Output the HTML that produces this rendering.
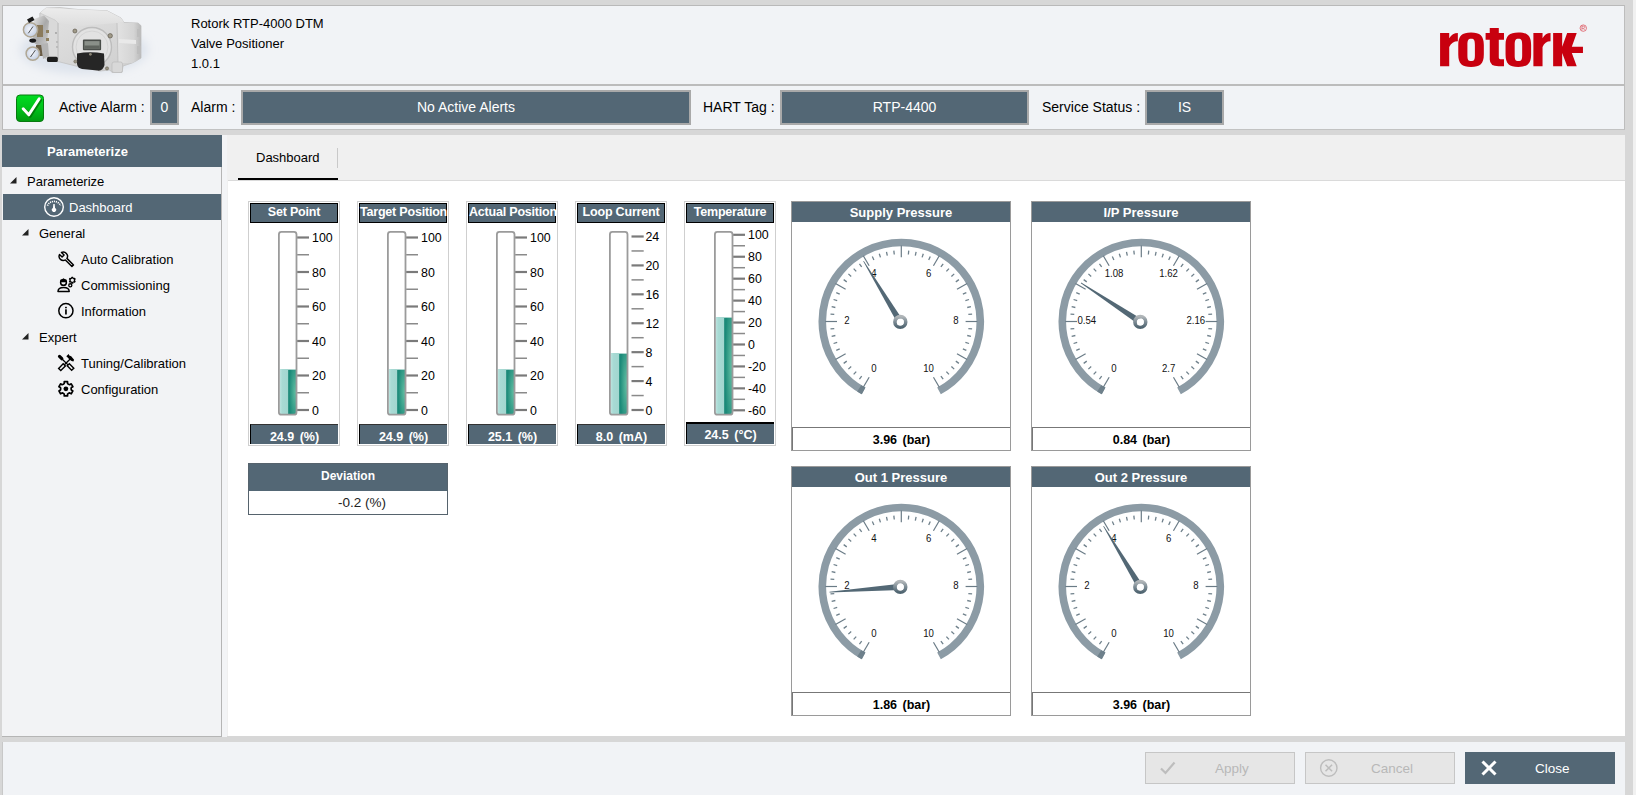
<!DOCTYPE html><html><head><meta charset="utf-8"><style>
*{margin:0;padding:0;box-sizing:border-box}
html,body{width:1636px;height:795px;overflow:hidden;background:#d7d7d7;font-family:"Liberation Sans", sans-serif;position:relative}
.abs{position:absolute}
.panel{position:absolute;background:#f1f3f6;}
.t13{font-size:13px;color:#000;white-space:nowrap;position:absolute;line-height:16px}
.slbox{position:absolute;background:#536775;border:2px solid #a9a9a9;color:#fff;font-size:14px;text-align:center;white-space:nowrap}
.dial{position:absolute;width:220px;height:250px;border:1px solid #9a9a9a;background:#fff}
.dhead{position:absolute;left:0;top:0;width:218px;height:20px;background:#536775;color:#fff;font-weight:bold;font-size:13px;text-align:center;line-height:22px}
.dval{position:absolute;left:0;top:225px;width:218px;height:23px;border-top:1px solid #777;border-left:1px solid #777;color:#000;font-weight:bold;font-size:12.5px;text-align:center;line-height:25px;word-spacing:2px}
.bar{position:absolute;top:201px;width:92px;height:245px;border:1px solid #cfcfcf;background:#fff}
.bhead{position:absolute;left:1px;top:1px;width:88px;height:20px;background:#536775;border:1px solid #000;color:#fff;font-weight:bold;font-size:12.5px;text-align:center;line-height:16px;white-space:nowrap;overflow:visible;letter-spacing:-0.2px}
.bval{position:absolute;left:1px;top:222px;width:88px;height:20px;background:#536775;border-left:1px solid #000;border-top:1px solid #333;color:#fff;font-weight:bold;font-size:12.5px;text-align:center;line-height:24px;word-spacing:2px}
.bval.t{top:220px;height:22px;border-top:2px solid #000;line-height:22px}
.nav{position:absolute;left:2px;top:135px;width:220px;height:602px;background:#f2f3f5;border-right:1px solid #b5b5b5;border-bottom:1px solid #b5b5b5}
.btn{position:absolute;top:752px;width:150px;height:32px;font-size:13.5px;line-height:32px}
</style></head><body><div class="abs" style="left:1633px;top:0;width:3px;height:795px;background:#f1f1f1"></div>
<div class="panel" style="left:2px;top:5px;width:1623px;height:81px;border-left:1px solid #b9b9b9;border-top:1px solid #b9b9b9;border-right:1px solid #bdbdbd;border-bottom:2px solid #bcbcbc"></div>
<div class="panel" style="left:2px;top:86px;width:1623px;height:44px;border-left:1px solid #b9b9b9;border-right:1px solid #bdbdbd;border-bottom:1px solid #c2c2c2"></div>
<svg class="abs" style="left:3px;top:6px" width="160" height="78" viewBox="3 6 160 78">
<defs>
<filter id="blur6" x="-50%" y="-50%" width="200%" height="200%"><feGaussianBlur stdDeviation="5"/></filter>
<linearGradient id="topf" x1="0" y1="0" x2="0" y2="1"><stop offset="0" stop-color="#ececec"/><stop offset="1" stop-color="#dedede"/></linearGradient>
<linearGradient id="frontf" x1="0" y1="0" x2="1" y2="1"><stop offset="0" stop-color="#e4e4e4"/><stop offset="1" stop-color="#cdcdcd"/></linearGradient>
<linearGradient id="rightf" x1="0" y1="0" x2="1" y2="0"><stop offset="0" stop-color="#e2e2e2"/><stop offset="0.7" stop-color="#d4d4d4"/><stop offset="1" stop-color="#b9b9b9"/></linearGradient>
<radialGradient id="gface" cx="0.45" cy="0.45" r="0.6"><stop offset="0" stop-color="#f4f6fb"/><stop offset="1" stop-color="#bfcbe0"/></radialGradient>
<linearGradient id="chrome" x1="0" y1="0" x2="1" y2="1"><stop offset="0" stop-color="#e8e8e8"/><stop offset="0.5" stop-color="#a9a9a9"/><stop offset="1" stop-color="#d0d0d0"/></linearGradient>
</defs>
<ellipse cx="84" cy="50" rx="64" ry="24" fill="#dde3ec" filter="url(#blur6)"/>
<polygon points="40,13 46,8 60,7.5 78,9.5 100,10.5 107,10.7 121,18 124,22.5 138,23 141,25.7 141,58 136,61 132,63 123,66 122,72.5 112,72.5 110,70 100,71 77,66.3 60,62 47,60 40,52" fill="url(#frontf)" stroke="#c2c2c2" stroke-width="0.8"/>
<polygon points="40,13 46,8 78,9.5 107,10.7 121,18 124,22.5 117,23 80,26 59,23 55,20" fill="url(#topf)"/>
<polygon points="40,13 55,20 58,23 58,60 47,60 40,52" fill="#d9d9d9" stroke="#c4c4c4" stroke-width="0.6"/>
<line x1="58" y1="23" x2="58" y2="60" stroke="#bdbdbd" stroke-width="0.8"/>
<polygon points="117,23 138,23 141,25.7 141,58 132,63 118,63" fill="url(#rightf)"/>
<line x1="117" y1="23" x2="118" y2="63" stroke="#bcbcbc" stroke-width="0.8"/>
<rect x="137" y="29" width="4" height="8" fill="#bdbdbd"/><rect x="137" y="46" width="4" height="8" fill="#bdbdbd"/>
<polygon points="119,39 136,40 136,44 119,43" fill="#e9e9e9"/>
<circle cx="92" cy="47" r="19.5" fill="#e2e2e2" stroke="#bdbdbd" stroke-width="1.4"/>
<circle cx="92" cy="47" r="16" fill="none" stroke="#d0d0d0" stroke-width="0.8"/>
<rect x="82.9" y="39.6" width="18.2" height="10.7" rx="1" fill="#4a4e4a"/>
<rect x="84.4" y="41.1" width="15.2" height="7.7" fill="#8a9089"/>
<rect x="84.4" y="45.5" width="15.2" height="3.3" fill="#5f645e"/>
<path d="M77,53.5 Q90,51 104,53.5 L104.5,65 Q103,71 98,70.6 L82,69 Q77.5,68 77,64 Z" fill="#262626"/>
<circle cx="110.2" cy="35.8" r="2.2" fill="#a09a88" stroke="#5e594d" stroke-width="0.7"/>
<circle cx="74.9" cy="31" r="2" fill="#a09a88" stroke="#5e594d" stroke-width="0.7"/>
<circle cx="75.4" cy="61.5" r="1.6" fill="#9a9484" stroke="#5e594d" stroke-width="0.5"/>
<circle cx="90.4" cy="54.3" r="1.4" fill="#8a8474"/>
<circle cx="107" cy="68.4" r="1.6" fill="#9a9484" stroke="#5e594d" stroke-width="0.5"/>
<rect x="112" y="62" width="10.5" height="10.5" rx="2" fill="#d8d8d8" stroke="#bcbcbc" stroke-width="0.7"/>
<circle cx="56" cy="33" r="0.9" fill="#9a9a9a"/><circle cx="57" cy="42" r="0.9" fill="#b0b0b0"/><circle cx="57" cy="47" r="0.9" fill="#b0b0b0"/>
<polygon points="34,19 44,15.5 49,21 47,44 41,48 33,42" fill="url(#chrome)"/>
<rect x="37" y="25" width="6" height="12" fill="#8a7a5c"/>
<rect x="36" y="45" width="8" height="11" fill="#6a5c46"/>
<polygon points="41,44 48,43 49,56 43,59" fill="#b4b4b4"/>
<rect x="46" y="30" width="3" height="3" fill="#8e8060"/><rect x="46" y="38" width="3" height="3" fill="#8e8060"/>
<circle cx="30.5" cy="29.8" r="7.1" fill="url(#gface)" stroke="#b0a794" stroke-width="1.5"/>
<line x1="28.3" y1="33.3" x2="33" y2="26.5" stroke="#2a2a2a" stroke-width="0.8"/>
<circle cx="32.8" cy="53.6" r="6.7" fill="url(#gface)" stroke="#b0a794" stroke-width="1.5"/>
<line x1="30.5" y1="57" x2="35.3" y2="50.2" stroke="#2a2a2a" stroke-width="0.8"/>
<polygon points="27,19.5 32.5,16.5 34.5,20 29,23" fill="#1a1a1a"/>
<ellipse cx="32.7" cy="40.6" rx="3.4" ry="2.1" fill="#1a1a1a"/>
<rect x="47" y="56.8" width="10.8" height="5.2" rx="1.5" fill="#1c1c1c"/>
</svg>
<div class="t13" style="left:191px;top:16px;font-size:13px">Rotork RTP-4000 DTM</div>
<div class="t13" style="left:191px;top:36px;font-size:13px">Valve Positioner</div>
<div class="t13" style="left:191px;top:56px;font-size:13px">1.0.1</div>
<svg class="abs" style="left:1430px;top:20px" width="170" height="55" viewBox="0 0 1636 529">
<g fill="#c8000f">
<path d="M97,125 H185 V175 Q215,125 268,125 V205 Q210,205 185,260 V445 H97 Z"/>
<path fill-rule="evenodd" transform="translate(0,0)" d="M395,120 C482,120 518,152 518,240 L518,332 C518,420 482,452 395,452 C308,452 272,420 272,332 L272,240 C272,152 308,120 395,120 Z M396,180 C426,180 432,198 432,240 L432,338 C432,380 426,394 396,394 C366,394 360,380 360,338 L360,240 C360,198 366,180 396,180 Z"/>
<path d="M575,78 H662 V125 H712 V190 H662 V360 Q662,378 690,378 H712 V445 H660 Q575,445 575,380 V190 H535 V125 H575 Z"/>
<path fill-rule="evenodd" transform="translate(455,0)" d="M395,120 C482,120 518,152 518,240 L518,332 C518,420 482,452 395,452 C308,452 272,420 272,332 L272,240 C272,152 308,120 395,120 Z M396,180 C426,180 432,198 432,240 L432,338 C432,380 426,394 396,394 C366,394 360,380 360,338 L360,240 C360,198 366,180 396,180 Z"/>
<path d="M995,125 H1083 V175 Q1110,125 1160,125 V205 Q1105,205 1083,260 V445 H995 Z"/>
<path d="M1185,125 H1272 V258 L1320,125 H1412 L1365,258 H1472 V318 H1365 L1412,445 H1320 L1272,318 V445 H1185 Z"/>
</g>
<circle cx="1475" cy="78" r="31" fill="none" stroke="#d8303c" stroke-width="6"/>
<path d="M1462,98 V58 M1462,60 H1478 Q1490,60 1490,70 Q1490,80 1478,80 H1462 M1474,80 L1490,98" fill="none" stroke="#d8303c" stroke-width="5"/>
</svg>
<svg class="abs" style="left:15px;top:94px" width="30" height="29" viewBox="0 0 30 29">
<defs><linearGradient id="gg" x1="0" y1="0" x2="0" y2="1"><stop offset="0" stop-color="#00dd22"/><stop offset="0.5" stop-color="#00c21a"/><stop offset="1" stop-color="#009a10"/></linearGradient></defs>
<rect x="1.5" y="1" width="27" height="26.5" rx="3.5" fill="url(#gg)" stroke="#087a10" stroke-width="1"/>
<path d="M8.6,15.2 L14.2,21.2 L24.6,5.2" fill="none" stroke="#005a00" stroke-width="3.4" stroke-linecap="round" stroke-linejoin="round" transform="translate(0.8,0.8)" opacity="0.6"/>
<path d="M8.2,14.8 L13.8,20.8 L24.2,4.8" fill="none" stroke="#fff" stroke-width="3" stroke-linecap="round" stroke-linejoin="round"/>
</svg>
<div class="t13" style="left:59px;top:99px;font-size:14px">Active Alarm :</div>
<div class="slbox" style="left:150px;top:90px;width:29px;height:35px;line-height:31px">0</div>
<div class="t13" style="left:191px;top:99px;font-size:14px">Alarm :</div>
<div class="slbox" style="left:241px;top:90px;width:450px;height:35px;line-height:31px">No Active Alerts</div>
<div class="t13" style="left:703px;top:99px;font-size:14px">HART Tag :</div>
<div class="slbox" style="left:780px;top:90px;width:249px;height:35px;line-height:31px">RTP-4400</div>
<div class="t13" style="left:1042px;top:99px;font-size:14px">Service Status :</div>
<div class="slbox" style="left:1145px;top:90px;width:79px;height:35px;line-height:31px">IS</div>
<div class="nav"></div>
<div class="abs" style="left:2px;top:135px;width:220px;height:32px;background:#536775;color:#fff;font-weight:bold;font-size:13px;line-height:34px;padding-left:45px">Parameterize</div>
<div class="abs" style="left:3px;top:194px;width:218px;height:26px;background:#536775"></div>
<svg class="abs" style="left:9px;top:176px" width="9" height="9"><polygon points="7.5,1 7.5,7.5 1,7.5" fill="#222"/></svg>
<div class="t13" style="left:27px;top:174px">Parameterize</div>
<div class="t13" style="left:69px;top:200px;color:#fff">Dashboard</div>
<svg class="abs" style="left:21px;top:228px" width="9" height="9"><polygon points="7.5,1 7.5,7.5 1,7.5" fill="#222"/></svg>
<div class="t13" style="left:39px;top:226px">General</div>
<div class="t13" style="left:81px;top:252px">Auto Calibration</div>
<div class="t13" style="left:81px;top:278px">Commissioning</div>
<div class="t13" style="left:81px;top:304px">Information</div>
<svg class="abs" style="left:21px;top:332px" width="9" height="9"><polygon points="7.5,1 7.5,7.5 1,7.5" fill="#222"/></svg>
<div class="t13" style="left:39px;top:330px">Expert</div>
<div class="t13" style="left:81px;top:356px">Tuning/Calibration</div>
<div class="t13" style="left:81px;top:382px">Configuration</div>
<svg class="abs" style="left:42px;top:195px" width="24" height="24" viewBox="0 0 24 24">
<circle cx="12" cy="12" r="9.3" fill="none" stroke="#fff" stroke-width="1.4"/>
<path d="M5.4,10.6 A7.3,7.3 0 0 1 18.6,10.6" fill="none" stroke="#fff" stroke-width="1.7" stroke-dasharray="1.1,0.9"/>
<path d="M11.35,9 L12.65,9 L13.1,12.9 A2.15,2.15 0 1 1 10.9,12.9 Z" fill="#fff"/>
</svg>
<svg class="abs" style="left:54px;top:248px" width="24" height="24" viewBox="0 0 24 24"><path transform="translate(9.3,8.3) rotate(-45)" d="M1.4,-3.96 L1.4,-0.3 L-1.4,-0.3 L-1.4,-3.96 A4.2,4.2 0 0 0 -1.1,4.05 L-1.1,13.3 L1.1,13.3 L1.1,4.05 A4.2,4.2 0 0 0 1.4,-3.96 Z" fill="none" stroke="#000" stroke-width="1.45" stroke-linejoin="round"/></svg>
<svg class="abs" style="left:54px;top:274px" width="24" height="24" viewBox="0 0 24 24">
<path d="M4,17.6 Q4,13.6 9.6,13.6 Q15.2,13.6 15.2,17.6 Z" fill="none" stroke="#000" stroke-width="1.5" stroke-linejoin="round"/>
<circle cx="9.5" cy="8.4" r="2.9" fill="none" stroke="#000" stroke-width="1.5"/>
<path d="M6.4,8.2 L6.6,5.4 L7.8,5.9 L9.5,4.3 L11.2,5.9 L12.4,5.4 L12.6,8.2 Z" fill="#000"/>
<circle cx="16.3" cy="11.3" r="1.55" fill="none" stroke="#000" stroke-width="1.3"/>
<path d="M17.25,4.38 L17.77,4.07 L17.78,3.25 L18.82,3.25 L18.83,4.07 L19.35,4.38 L19.88,4.67 L20.60,4.27 L21.12,5.17 L20.41,5.59 L20.40,6.20 L20.41,6.81 L21.12,7.23 L20.60,8.13 L19.88,7.73 L19.35,8.02 L18.83,8.33 L18.82,9.15 L17.78,9.15 L17.77,8.33 L17.25,8.02 L16.72,7.73 L16.00,8.13 L15.48,7.23 L16.19,6.81 L16.20,6.20 L16.19,5.59 L15.48,5.17 L16.00,4.27 L16.72,4.67 Z" fill="none" stroke="#000" stroke-width="1.2" stroke-linejoin="round"/></svg>
<svg class="abs" style="left:57px;top:302px" width="18" height="18" viewBox="0 0 18 18">
<circle cx="8.9" cy="8.7" r="7.1" fill="none" stroke="#000" stroke-width="1.5"/>
<rect x="8.1" y="7.3" width="1.7" height="5.2" fill="#000"/><rect x="8.1" y="4.8" width="1.7" height="1.5" fill="#000"/>
</svg>
<svg class="abs" style="left:54px;top:350px" width="24" height="24" viewBox="0 0 24 24">
<line x1="5.5" y1="6.4" x2="7.8" y2="8.7" stroke="#000" stroke-width="3.2" stroke-linecap="round"/>
<line x1="7.8" y1="8.7" x2="14" y2="14.9" stroke="#000" stroke-width="1.3"/>
<rect x="13.35" y="15.45" width="6.3" height="3.1" transform="rotate(45 16.5 17)" fill="none" stroke="#000" stroke-width="1.4"/>
<rect x="4.75" y="15.65" width="6.5" height="3.1" transform="rotate(-45 8 17.2)" fill="none" stroke="#000" stroke-width="1.4"/>
<line x1="10.4" y1="14.8" x2="16.2" y2="9" stroke="#000" stroke-width="1.3"/>
<polygon points="12.3,6.2 14.6,4.0 15.3,5.6 17.2,6.2 20.1,9.8 19.4,11.4 17.6,10.9 15.3,9.4 14.4,8.2" fill="#000"/>
</svg>
<svg class="abs" style="left:54px;top:376px" width="24" height="24" viewBox="0 0 24 24">
<path d="M9.30,8.30 L10.26,7.44 L10.26,5.69 L13.54,5.69 L13.54,7.44 L14.50,8.30 L15.72,8.70 L17.24,7.82 L18.88,10.67 L17.36,11.54 L17.10,12.80 L17.36,14.06 L18.88,14.93 L17.24,17.78 L15.72,16.90 L14.50,17.30 L13.54,18.16 L13.54,19.91 L10.26,19.91 L10.26,18.16 L9.30,17.30 L8.08,16.90 L6.56,17.78 L4.92,14.93 L6.44,14.06 L6.70,12.80 L6.44,11.54 L4.92,10.67 L6.56,7.82 L8.08,8.70 Z" fill="none" stroke="#000" stroke-width="1.7" stroke-linejoin="round"/>
<circle cx="11.9" cy="12.8" r="2.4" fill="#000"/>
</svg>
<div class="abs" style="left:222px;top:135px;width:5px;height:602px;background:#f3f4f6"></div>
<div class="abs" style="left:227px;top:135px;width:1398px;height:46px;background:#f0f0f0"></div>
<div class="abs" style="left:227px;top:181px;width:1398px;height:555px;background:#fff;border-left:1px solid #f0f0f0"></div>
<div class="t13" style="left:256px;top:150px">Dashboard</div>
<div class="abs" style="left:337px;top:148px;width:1px;height:20px;background:#c9c9c9"></div>
<div class="abs" style="left:228px;top:180px;width:1397px;height:1px;background:#dadada"></div><div class="abs" style="left:238px;top:178px;width:100px;height:2px;background:#000"></div>
<svg width="0" height="0" style="position:absolute"><defs>
<radialGradient id="tealg" cx="0.85" cy="0.5" r="0.75"><stop offset="0" stop-color="#5fbca1"/><stop offset="1" stop-color="#1c8a79"/></radialGradient><linearGradient id="lightg" x1="0" y1="0" x2="1" y2="0"><stop offset="0" stop-color="#bce4df"/><stop offset="0.3" stop-color="#a8dad4"/><stop offset="1" stop-color="#a2d6cf"/></linearGradient>
<linearGradient id="capg" x1="0" y1="0" x2="0" y2="1"><stop offset="0" stop-color="#b0b5b8"/><stop offset="0.5" stop-color="#7d8c95"/><stop offset="1" stop-color="#506571"/></linearGradient>
</defs></svg>
<div class="bar" style="left:248px"><div class="bhead">Set Point</div><svg width="92" height="245" style="position:absolute;left:-1px;top:-1px"><rect x="31.8" y="168" width="8.3" height="45.5" fill="url(#lightg)"/><rect x="40.1" y="168.6" width="8.4" height="44.9" fill="url(#tealg)"/><rect x="30.9" y="30.9" width="17.6" height="182.8" rx="2.5" fill="none" stroke="#9b9b9b" stroke-width="1.8"/><line x1="49.2" y1="209.00" x2="61" y2="209.00" stroke="#7a7a7a" stroke-width="2.2"/><text x="64" y="194.18" font-size="12.4" fill="#000" transform="scale(1,1.1)">0</text><line x1="49.2" y1="191.75" x2="61" y2="191.75" stroke="#8a8a8a" stroke-width="1.5"/><line x1="49.2" y1="174.50" x2="61" y2="174.50" stroke="#7a7a7a" stroke-width="2.2"/><text x="64" y="162.82" font-size="12.4" fill="#000" transform="scale(1,1.1)">20</text><line x1="49.2" y1="157.25" x2="61" y2="157.25" stroke="#8a8a8a" stroke-width="1.5"/><line x1="49.2" y1="140.00" x2="61" y2="140.00" stroke="#7a7a7a" stroke-width="2.2"/><text x="64" y="131.45" font-size="12.4" fill="#000" transform="scale(1,1.1)">40</text><line x1="49.2" y1="122.75" x2="61" y2="122.75" stroke="#8a8a8a" stroke-width="1.5"/><line x1="49.2" y1="105.50" x2="61" y2="105.50" stroke="#7a7a7a" stroke-width="2.2"/><text x="64" y="100.09" font-size="12.4" fill="#000" transform="scale(1,1.1)">60</text><line x1="49.2" y1="88.25" x2="61" y2="88.25" stroke="#8a8a8a" stroke-width="1.5"/><line x1="49.2" y1="71.00" x2="61" y2="71.00" stroke="#7a7a7a" stroke-width="2.2"/><text x="64" y="68.73" font-size="12.4" fill="#000" transform="scale(1,1.1)">80</text><line x1="49.2" y1="53.75" x2="61" y2="53.75" stroke="#8a8a8a" stroke-width="1.5"/><line x1="49.2" y1="36.50" x2="61" y2="36.50" stroke="#7a7a7a" stroke-width="2.2"/><text x="64" y="37.36" font-size="12.4" fill="#000" transform="scale(1,1.1)">100</text></svg><div class="bval">24.9&nbsp;(%)</div></div>
<div class="bar" style="left:357px"><div class="bhead">Target Position</div><svg width="92" height="245" style="position:absolute;left:-1px;top:-1px"><rect x="31.8" y="168" width="8.3" height="45.5" fill="url(#lightg)"/><rect x="40.1" y="168.6" width="8.4" height="44.9" fill="url(#tealg)"/><rect x="30.9" y="30.9" width="17.6" height="182.8" rx="2.5" fill="none" stroke="#9b9b9b" stroke-width="1.8"/><line x1="49.2" y1="209.00" x2="61" y2="209.00" stroke="#7a7a7a" stroke-width="2.2"/><text x="64" y="194.18" font-size="12.4" fill="#000" transform="scale(1,1.1)">0</text><line x1="49.2" y1="191.75" x2="61" y2="191.75" stroke="#8a8a8a" stroke-width="1.5"/><line x1="49.2" y1="174.50" x2="61" y2="174.50" stroke="#7a7a7a" stroke-width="2.2"/><text x="64" y="162.82" font-size="12.4" fill="#000" transform="scale(1,1.1)">20</text><line x1="49.2" y1="157.25" x2="61" y2="157.25" stroke="#8a8a8a" stroke-width="1.5"/><line x1="49.2" y1="140.00" x2="61" y2="140.00" stroke="#7a7a7a" stroke-width="2.2"/><text x="64" y="131.45" font-size="12.4" fill="#000" transform="scale(1,1.1)">40</text><line x1="49.2" y1="122.75" x2="61" y2="122.75" stroke="#8a8a8a" stroke-width="1.5"/><line x1="49.2" y1="105.50" x2="61" y2="105.50" stroke="#7a7a7a" stroke-width="2.2"/><text x="64" y="100.09" font-size="12.4" fill="#000" transform="scale(1,1.1)">60</text><line x1="49.2" y1="88.25" x2="61" y2="88.25" stroke="#8a8a8a" stroke-width="1.5"/><line x1="49.2" y1="71.00" x2="61" y2="71.00" stroke="#7a7a7a" stroke-width="2.2"/><text x="64" y="68.73" font-size="12.4" fill="#000" transform="scale(1,1.1)">80</text><line x1="49.2" y1="53.75" x2="61" y2="53.75" stroke="#8a8a8a" stroke-width="1.5"/><line x1="49.2" y1="36.50" x2="61" y2="36.50" stroke="#7a7a7a" stroke-width="2.2"/><text x="64" y="37.36" font-size="12.4" fill="#000" transform="scale(1,1.1)">100</text></svg><div class="bval">24.9&nbsp;(%)</div></div>
<div class="bar" style="left:466px"><div class="bhead">Actual Position</div><svg width="92" height="245" style="position:absolute;left:-1px;top:-1px"><rect x="31.8" y="168" width="8.3" height="45.5" fill="url(#lightg)"/><rect x="40.1" y="168.6" width="8.4" height="44.9" fill="url(#tealg)"/><rect x="30.9" y="30.9" width="17.6" height="182.8" rx="2.5" fill="none" stroke="#9b9b9b" stroke-width="1.8"/><line x1="49.2" y1="209.00" x2="61" y2="209.00" stroke="#7a7a7a" stroke-width="2.2"/><text x="64" y="194.18" font-size="12.4" fill="#000" transform="scale(1,1.1)">0</text><line x1="49.2" y1="191.75" x2="61" y2="191.75" stroke="#8a8a8a" stroke-width="1.5"/><line x1="49.2" y1="174.50" x2="61" y2="174.50" stroke="#7a7a7a" stroke-width="2.2"/><text x="64" y="162.82" font-size="12.4" fill="#000" transform="scale(1,1.1)">20</text><line x1="49.2" y1="157.25" x2="61" y2="157.25" stroke="#8a8a8a" stroke-width="1.5"/><line x1="49.2" y1="140.00" x2="61" y2="140.00" stroke="#7a7a7a" stroke-width="2.2"/><text x="64" y="131.45" font-size="12.4" fill="#000" transform="scale(1,1.1)">40</text><line x1="49.2" y1="122.75" x2="61" y2="122.75" stroke="#8a8a8a" stroke-width="1.5"/><line x1="49.2" y1="105.50" x2="61" y2="105.50" stroke="#7a7a7a" stroke-width="2.2"/><text x="64" y="100.09" font-size="12.4" fill="#000" transform="scale(1,1.1)">60</text><line x1="49.2" y1="88.25" x2="61" y2="88.25" stroke="#8a8a8a" stroke-width="1.5"/><line x1="49.2" y1="71.00" x2="61" y2="71.00" stroke="#7a7a7a" stroke-width="2.2"/><text x="64" y="68.73" font-size="12.4" fill="#000" transform="scale(1,1.1)">80</text><line x1="49.2" y1="53.75" x2="61" y2="53.75" stroke="#8a8a8a" stroke-width="1.5"/><line x1="49.2" y1="36.50" x2="61" y2="36.50" stroke="#7a7a7a" stroke-width="2.2"/><text x="64" y="37.36" font-size="12.4" fill="#000" transform="scale(1,1.1)">100</text></svg><div class="bval">25.1&nbsp;(%)</div></div>
<div class="bar" style="left:575px"><div class="bhead">Loop Current</div><svg width="92" height="245" style="position:absolute;left:-1px;top:-1px"><rect x="35.8" y="152" width="8.3" height="61.5" fill="url(#lightg)"/><rect x="44.1" y="152.6" width="8.4" height="60.9" fill="url(#tealg)"/><rect x="34.9" y="30.9" width="17.6" height="182.8" rx="2.5" fill="none" stroke="#9b9b9b" stroke-width="1.8"/><line x1="56.5" y1="209.00" x2="68.7" y2="209.00" stroke="#7a7a7a" stroke-width="2.2"/><text x="70.5" y="194.18" font-size="12.4" fill="#000" transform="scale(1,1.1)">0</text><line x1="56.5" y1="194.54" x2="68.7" y2="194.54" stroke="#8a8a8a" stroke-width="1.5"/><line x1="56.5" y1="180.08" x2="68.7" y2="180.08" stroke="#7a7a7a" stroke-width="2.2"/><text x="70.5" y="167.89" font-size="12.4" fill="#000" transform="scale(1,1.1)">4</text><line x1="56.5" y1="165.62" x2="68.7" y2="165.62" stroke="#8a8a8a" stroke-width="1.5"/><line x1="56.5" y1="151.17" x2="68.7" y2="151.17" stroke="#7a7a7a" stroke-width="2.2"/><text x="70.5" y="141.61" font-size="12.4" fill="#000" transform="scale(1,1.1)">8</text><line x1="56.5" y1="136.71" x2="68.7" y2="136.71" stroke="#8a8a8a" stroke-width="1.5"/><line x1="56.5" y1="122.25" x2="68.7" y2="122.25" stroke="#7a7a7a" stroke-width="2.2"/><text x="70.5" y="115.32" font-size="12.4" fill="#000" transform="scale(1,1.1)">12</text><line x1="56.5" y1="107.79" x2="68.7" y2="107.79" stroke="#8a8a8a" stroke-width="1.5"/><line x1="56.5" y1="93.33" x2="68.7" y2="93.33" stroke="#7a7a7a" stroke-width="2.2"/><text x="70.5" y="89.03" font-size="12.4" fill="#000" transform="scale(1,1.1)">16</text><line x1="56.5" y1="78.88" x2="68.7" y2="78.88" stroke="#8a8a8a" stroke-width="1.5"/><line x1="56.5" y1="64.42" x2="68.7" y2="64.42" stroke="#7a7a7a" stroke-width="2.2"/><text x="70.5" y="62.74" font-size="12.4" fill="#000" transform="scale(1,1.1)">20</text><line x1="56.5" y1="49.96" x2="68.7" y2="49.96" stroke="#8a8a8a" stroke-width="1.5"/><line x1="56.5" y1="35.50" x2="68.7" y2="35.50" stroke="#7a7a7a" stroke-width="2.2"/><text x="70.5" y="36.45" font-size="12.4" fill="#000" transform="scale(1,1.1)">24</text></svg><div class="bval">8.0&nbsp;(mA)</div></div>
<div class="bar" style="left:684px"><div class="bhead">Temperature</div><svg width="92" height="245" style="position:absolute;left:-1px;top:-1px"><rect x="31.8" y="116" width="8.3" height="97.5" fill="url(#lightg)"/><rect x="40.1" y="116.6" width="8.4" height="96.9" fill="url(#tealg)"/><rect x="30.9" y="30.9" width="17.6" height="182.8" rx="2.5" fill="none" stroke="#9b9b9b" stroke-width="1.8"/><line x1="49.2" y1="209.30" x2="61" y2="209.30" stroke="#7a7a7a" stroke-width="2.2"/><text x="64" y="194.45" font-size="12.4" fill="#000" transform="scale(1,1.1)">-60</text><line x1="49.2" y1="198.33" x2="61" y2="198.33" stroke="#8a8a8a" stroke-width="1.5"/><line x1="49.2" y1="187.36" x2="61" y2="187.36" stroke="#7a7a7a" stroke-width="2.2"/><text x="64" y="174.51" font-size="12.4" fill="#000" transform="scale(1,1.1)">-40</text><line x1="49.2" y1="176.39" x2="61" y2="176.39" stroke="#8a8a8a" stroke-width="1.5"/><line x1="49.2" y1="165.43" x2="61" y2="165.43" stroke="#7a7a7a" stroke-width="2.2"/><text x="64" y="154.57" font-size="12.4" fill="#000" transform="scale(1,1.1)">-20</text><line x1="49.2" y1="154.46" x2="61" y2="154.46" stroke="#8a8a8a" stroke-width="1.5"/><line x1="49.2" y1="143.49" x2="61" y2="143.49" stroke="#7a7a7a" stroke-width="2.2"/><text x="64" y="134.62" font-size="12.4" fill="#000" transform="scale(1,1.1)">0</text><line x1="49.2" y1="132.52" x2="61" y2="132.52" stroke="#8a8a8a" stroke-width="1.5"/><line x1="49.2" y1="121.55" x2="61" y2="121.55" stroke="#7a7a7a" stroke-width="2.2"/><text x="64" y="114.68" font-size="12.4" fill="#000" transform="scale(1,1.1)">20</text><line x1="49.2" y1="110.58" x2="61" y2="110.58" stroke="#8a8a8a" stroke-width="1.5"/><line x1="49.2" y1="99.61" x2="61" y2="99.61" stroke="#7a7a7a" stroke-width="2.2"/><text x="64" y="94.74" font-size="12.4" fill="#000" transform="scale(1,1.1)">40</text><line x1="49.2" y1="88.64" x2="61" y2="88.64" stroke="#8a8a8a" stroke-width="1.5"/><line x1="49.2" y1="77.68" x2="61" y2="77.68" stroke="#7a7a7a" stroke-width="2.2"/><text x="64" y="74.80" font-size="12.4" fill="#000" transform="scale(1,1.1)">60</text><line x1="49.2" y1="66.71" x2="61" y2="66.71" stroke="#8a8a8a" stroke-width="1.5"/><line x1="49.2" y1="55.74" x2="61" y2="55.74" stroke="#7a7a7a" stroke-width="2.2"/><text x="64" y="54.85" font-size="12.4" fill="#000" transform="scale(1,1.1)">80</text><line x1="49.2" y1="44.77" x2="61" y2="44.77" stroke="#8a8a8a" stroke-width="1.5"/><line x1="49.2" y1="33.80" x2="61" y2="33.80" stroke="#7a7a7a" stroke-width="2.2"/><text x="64" y="34.91" font-size="12.4" fill="#000" transform="scale(1,1.1)">100</text></svg><div class="bval t">24.5&nbsp;(°C)</div></div>
<div class="abs" style="left:248px;top:463px;width:200px;height:52px;border:1px solid #56636d;background:#fff"><div style="height:27px;background:#536775;color:#fff;font-weight:bold;font-size:12px;text-align:center;line-height:25px">Deviation</div><div style="height:23px;color:#222;font-size:13.5px;text-align:center;line-height:23px;padding-left:28px">-0.2&nbsp;(%)</div></div>
<div class="dial" style="left:791px;top:201px"><div class="dhead">Supply Pressure</div><svg width="218" height="205" viewBox="0 0 218 205" style="position:absolute;left:0;top:20px"><path d="M71.60,168.93 A79,79 0 1 1 147.00,168.93" fill="none" stroke="#8c9ba5" stroke-width="7.6"/><path d="M71.60,168.93 A79,79 0 0 1 67.20,166.35" fill="none" stroke="#6e808b" stroke-width="7.6"/><line x1="71.30" y1="165.32" x2="77.15" y2="155.19" stroke="#6a7b86" stroke-width="1.2"/><line x1="67.45" y1="157.10" x2="69.68" y2="154.03" stroke="#6f808b" stroke-width="1.3"/><line x1="61.66" y1="152.41" x2="64.20" y2="149.59" stroke="#6f808b" stroke-width="1.3"/><line x1="56.39" y1="147.14" x2="59.21" y2="144.60" stroke="#6f808b" stroke-width="1.3"/><line x1="51.70" y1="141.35" x2="54.77" y2="139.12" stroke="#6f808b" stroke-width="1.3"/><line x1="43.48" y1="137.50" x2="53.61" y2="131.65" stroke="#6a7b86" stroke-width="1.2"/><line x1="44.26" y1="128.46" x2="47.73" y2="126.91" stroke="#6f808b" stroke-width="1.3"/><line x1="41.58" y1="121.50" x2="45.20" y2="120.33" stroke="#6f808b" stroke-width="1.3"/><line x1="39.66" y1="114.30" x2="43.37" y2="113.51" stroke="#6f808b" stroke-width="1.3"/><line x1="38.49" y1="106.94" x2="42.27" y2="106.55" stroke="#6f808b" stroke-width="1.3"/><line x1="33.30" y1="99.50" x2="45.00" y2="99.50" stroke="#6a7b86" stroke-width="1.2"/><line x1="38.49" y1="92.06" x2="42.27" y2="92.45" stroke="#6f808b" stroke-width="1.3"/><line x1="39.66" y1="84.70" x2="43.37" y2="85.49" stroke="#6f808b" stroke-width="1.3"/><line x1="41.58" y1="77.50" x2="45.20" y2="78.67" stroke="#6f808b" stroke-width="1.3"/><line x1="44.26" y1="70.54" x2="47.73" y2="72.09" stroke="#6f808b" stroke-width="1.3"/><line x1="43.48" y1="61.50" x2="53.61" y2="67.35" stroke="#6a7b86" stroke-width="1.2"/><line x1="51.70" y1="57.65" x2="54.77" y2="59.88" stroke="#6f808b" stroke-width="1.3"/><line x1="56.39" y1="51.86" x2="59.21" y2="54.40" stroke="#6f808b" stroke-width="1.3"/><line x1="61.66" y1="46.59" x2="64.20" y2="49.41" stroke="#6f808b" stroke-width="1.3"/><line x1="67.45" y1="41.90" x2="69.68" y2="44.97" stroke="#6f808b" stroke-width="1.3"/><line x1="71.30" y1="33.68" x2="77.15" y2="43.81" stroke="#6a7b86" stroke-width="1.2"/><line x1="80.34" y1="34.46" x2="81.89" y2="37.93" stroke="#6f808b" stroke-width="1.3"/><line x1="87.30" y1="31.78" x2="88.47" y2="35.40" stroke="#6f808b" stroke-width="1.3"/><line x1="94.50" y1="29.86" x2="95.29" y2="33.57" stroke="#6f808b" stroke-width="1.3"/><line x1="101.86" y1="28.69" x2="102.25" y2="32.47" stroke="#6f808b" stroke-width="1.3"/><line x1="109.30" y1="23.50" x2="109.30" y2="35.20" stroke="#6a7b86" stroke-width="1.2"/><line x1="116.74" y1="28.69" x2="116.35" y2="32.47" stroke="#6f808b" stroke-width="1.3"/><line x1="124.10" y1="29.86" x2="123.31" y2="33.57" stroke="#6f808b" stroke-width="1.3"/><line x1="131.30" y1="31.78" x2="130.13" y2="35.40" stroke="#6f808b" stroke-width="1.3"/><line x1="138.26" y1="34.46" x2="136.71" y2="37.93" stroke="#6f808b" stroke-width="1.3"/><line x1="147.30" y1="33.68" x2="141.45" y2="43.81" stroke="#6a7b86" stroke-width="1.2"/><line x1="151.15" y1="41.90" x2="148.92" y2="44.97" stroke="#6f808b" stroke-width="1.3"/><line x1="156.94" y1="46.59" x2="154.40" y2="49.41" stroke="#6f808b" stroke-width="1.3"/><line x1="162.21" y1="51.86" x2="159.39" y2="54.40" stroke="#6f808b" stroke-width="1.3"/><line x1="166.90" y1="57.65" x2="163.83" y2="59.88" stroke="#6f808b" stroke-width="1.3"/><line x1="175.12" y1="61.50" x2="164.99" y2="67.35" stroke="#6a7b86" stroke-width="1.2"/><line x1="174.34" y1="70.54" x2="170.87" y2="72.09" stroke="#6f808b" stroke-width="1.3"/><line x1="177.02" y1="77.50" x2="173.40" y2="78.67" stroke="#6f808b" stroke-width="1.3"/><line x1="178.94" y1="84.70" x2="175.23" y2="85.49" stroke="#6f808b" stroke-width="1.3"/><line x1="180.11" y1="92.06" x2="176.33" y2="92.45" stroke="#6f808b" stroke-width="1.3"/><line x1="185.30" y1="99.50" x2="173.60" y2="99.50" stroke="#6a7b86" stroke-width="1.2"/><line x1="180.11" y1="106.94" x2="176.33" y2="106.55" stroke="#6f808b" stroke-width="1.3"/><line x1="178.94" y1="114.30" x2="175.23" y2="113.51" stroke="#6f808b" stroke-width="1.3"/><line x1="177.02" y1="121.50" x2="173.40" y2="120.33" stroke="#6f808b" stroke-width="1.3"/><line x1="174.34" y1="128.46" x2="170.87" y2="126.91" stroke="#6f808b" stroke-width="1.3"/><line x1="175.12" y1="137.50" x2="164.99" y2="131.65" stroke="#6a7b86" stroke-width="1.2"/><line x1="166.90" y1="141.35" x2="163.83" y2="139.12" stroke="#6f808b" stroke-width="1.3"/><line x1="162.21" y1="147.14" x2="159.39" y2="144.60" stroke="#6f808b" stroke-width="1.3"/><line x1="156.94" y1="152.41" x2="154.40" y2="149.59" stroke="#6f808b" stroke-width="1.3"/><line x1="151.15" y1="157.10" x2="148.92" y2="154.03" stroke="#6f808b" stroke-width="1.3"/><line x1="147.30" y1="165.32" x2="141.45" y2="155.19" stroke="#6a7b86" stroke-width="1.2"/><text x="82.05" y="136.00" font-size="9.6" text-anchor="middle" fill="#111" transform="scale(1,1.1)">0</text><text x="54.80" y="93.09" font-size="9.6" text-anchor="middle" fill="#111" transform="scale(1,1.1)">2</text><text x="82.05" y="50.18" font-size="9.6" text-anchor="middle" fill="#111" transform="scale(1,1.1)">4</text><text x="136.55" y="50.18" font-size="9.6" text-anchor="middle" fill="#111" transform="scale(1,1.1)">6</text><text x="163.80" y="93.09" font-size="9.6" text-anchor="middle" fill="#111" transform="scale(1,1.1)">8</text><text x="136.55" y="136.00" font-size="9.6" text-anchor="middle" fill="#111" transform="scale(1,1.1)">10</text><polygon points="105.65,101.51 71.22,39.35 71.82,38.99 110.95,98.29" fill="#536875"/><circle cx="108.3" cy="99.9" r="5.35" fill="none" stroke="url(#capg)" stroke-width="3.7"/><circle cx="108.3" cy="99.9" r="3.5" fill="#fff"/></svg><div class="dval">3.96&nbsp;(bar)</div></div>
<div class="dial" style="left:1031px;top:201px"><div class="dhead">I/P Pressure</div><svg width="218" height="205" viewBox="0 0 218 205" style="position:absolute;left:0;top:20px"><path d="M71.60,168.93 A79,79 0 1 1 147.00,168.93" fill="none" stroke="#8c9ba5" stroke-width="7.6"/><path d="M71.60,168.93 A79,79 0 0 1 67.20,166.35" fill="none" stroke="#6e808b" stroke-width="7.6"/><line x1="71.30" y1="165.32" x2="77.15" y2="155.19" stroke="#6a7b86" stroke-width="1.2"/><line x1="67.45" y1="157.10" x2="69.68" y2="154.03" stroke="#6f808b" stroke-width="1.3"/><line x1="61.66" y1="152.41" x2="64.20" y2="149.59" stroke="#6f808b" stroke-width="1.3"/><line x1="56.39" y1="147.14" x2="59.21" y2="144.60" stroke="#6f808b" stroke-width="1.3"/><line x1="51.70" y1="141.35" x2="54.77" y2="139.12" stroke="#6f808b" stroke-width="1.3"/><line x1="43.48" y1="137.50" x2="53.61" y2="131.65" stroke="#6a7b86" stroke-width="1.2"/><line x1="44.26" y1="128.46" x2="47.73" y2="126.91" stroke="#6f808b" stroke-width="1.3"/><line x1="41.58" y1="121.50" x2="45.20" y2="120.33" stroke="#6f808b" stroke-width="1.3"/><line x1="39.66" y1="114.30" x2="43.37" y2="113.51" stroke="#6f808b" stroke-width="1.3"/><line x1="38.49" y1="106.94" x2="42.27" y2="106.55" stroke="#6f808b" stroke-width="1.3"/><line x1="33.30" y1="99.50" x2="45.00" y2="99.50" stroke="#6a7b86" stroke-width="1.2"/><line x1="38.49" y1="92.06" x2="42.27" y2="92.45" stroke="#6f808b" stroke-width="1.3"/><line x1="39.66" y1="84.70" x2="43.37" y2="85.49" stroke="#6f808b" stroke-width="1.3"/><line x1="41.58" y1="77.50" x2="45.20" y2="78.67" stroke="#6f808b" stroke-width="1.3"/><line x1="44.26" y1="70.54" x2="47.73" y2="72.09" stroke="#6f808b" stroke-width="1.3"/><line x1="43.48" y1="61.50" x2="53.61" y2="67.35" stroke="#6a7b86" stroke-width="1.2"/><line x1="51.70" y1="57.65" x2="54.77" y2="59.88" stroke="#6f808b" stroke-width="1.3"/><line x1="56.39" y1="51.86" x2="59.21" y2="54.40" stroke="#6f808b" stroke-width="1.3"/><line x1="61.66" y1="46.59" x2="64.20" y2="49.41" stroke="#6f808b" stroke-width="1.3"/><line x1="67.45" y1="41.90" x2="69.68" y2="44.97" stroke="#6f808b" stroke-width="1.3"/><line x1="71.30" y1="33.68" x2="77.15" y2="43.81" stroke="#6a7b86" stroke-width="1.2"/><line x1="80.34" y1="34.46" x2="81.89" y2="37.93" stroke="#6f808b" stroke-width="1.3"/><line x1="87.30" y1="31.78" x2="88.47" y2="35.40" stroke="#6f808b" stroke-width="1.3"/><line x1="94.50" y1="29.86" x2="95.29" y2="33.57" stroke="#6f808b" stroke-width="1.3"/><line x1="101.86" y1="28.69" x2="102.25" y2="32.47" stroke="#6f808b" stroke-width="1.3"/><line x1="109.30" y1="23.50" x2="109.30" y2="35.20" stroke="#6a7b86" stroke-width="1.2"/><line x1="116.74" y1="28.69" x2="116.35" y2="32.47" stroke="#6f808b" stroke-width="1.3"/><line x1="124.10" y1="29.86" x2="123.31" y2="33.57" stroke="#6f808b" stroke-width="1.3"/><line x1="131.30" y1="31.78" x2="130.13" y2="35.40" stroke="#6f808b" stroke-width="1.3"/><line x1="138.26" y1="34.46" x2="136.71" y2="37.93" stroke="#6f808b" stroke-width="1.3"/><line x1="147.30" y1="33.68" x2="141.45" y2="43.81" stroke="#6a7b86" stroke-width="1.2"/><line x1="151.15" y1="41.90" x2="148.92" y2="44.97" stroke="#6f808b" stroke-width="1.3"/><line x1="156.94" y1="46.59" x2="154.40" y2="49.41" stroke="#6f808b" stroke-width="1.3"/><line x1="162.21" y1="51.86" x2="159.39" y2="54.40" stroke="#6f808b" stroke-width="1.3"/><line x1="166.90" y1="57.65" x2="163.83" y2="59.88" stroke="#6f808b" stroke-width="1.3"/><line x1="175.12" y1="61.50" x2="164.99" y2="67.35" stroke="#6a7b86" stroke-width="1.2"/><line x1="174.34" y1="70.54" x2="170.87" y2="72.09" stroke="#6f808b" stroke-width="1.3"/><line x1="177.02" y1="77.50" x2="173.40" y2="78.67" stroke="#6f808b" stroke-width="1.3"/><line x1="178.94" y1="84.70" x2="175.23" y2="85.49" stroke="#6f808b" stroke-width="1.3"/><line x1="180.11" y1="92.06" x2="176.33" y2="92.45" stroke="#6f808b" stroke-width="1.3"/><line x1="185.30" y1="99.50" x2="173.60" y2="99.50" stroke="#6a7b86" stroke-width="1.2"/><line x1="180.11" y1="106.94" x2="176.33" y2="106.55" stroke="#6f808b" stroke-width="1.3"/><line x1="178.94" y1="114.30" x2="175.23" y2="113.51" stroke="#6f808b" stroke-width="1.3"/><line x1="177.02" y1="121.50" x2="173.40" y2="120.33" stroke="#6f808b" stroke-width="1.3"/><line x1="174.34" y1="128.46" x2="170.87" y2="126.91" stroke="#6f808b" stroke-width="1.3"/><line x1="175.12" y1="137.50" x2="164.99" y2="131.65" stroke="#6a7b86" stroke-width="1.2"/><line x1="166.90" y1="141.35" x2="163.83" y2="139.12" stroke="#6f808b" stroke-width="1.3"/><line x1="162.21" y1="147.14" x2="159.39" y2="144.60" stroke="#6f808b" stroke-width="1.3"/><line x1="156.94" y1="152.41" x2="154.40" y2="149.59" stroke="#6f808b" stroke-width="1.3"/><line x1="151.15" y1="157.10" x2="148.92" y2="154.03" stroke="#6f808b" stroke-width="1.3"/><line x1="147.30" y1="165.32" x2="141.45" y2="155.19" stroke="#6a7b86" stroke-width="1.2"/><text x="82.05" y="136.00" font-size="9.6" text-anchor="middle" fill="#111" transform="scale(1,1.1)">0</text><text x="54.80" y="93.09" font-size="9.6" text-anchor="middle" fill="#111" transform="scale(1,1.1)">0.54</text><text x="82.05" y="50.18" font-size="9.6" text-anchor="middle" fill="#111" transform="scale(1,1.1)">1.08</text><text x="136.55" y="50.18" font-size="9.6" text-anchor="middle" fill="#111" transform="scale(1,1.1)">1.62</text><text x="163.80" y="93.09" font-size="9.6" text-anchor="middle" fill="#111" transform="scale(1,1.1)">2.16</text><text x="136.55" y="136.00" font-size="9.6" text-anchor="middle" fill="#111" transform="scale(1,1.1)">2.7</text><polygon points="106.60,102.49 48.79,61.18 49.17,60.59 110.00,97.31" fill="#536875"/><circle cx="108.3" cy="99.9" r="5.35" fill="none" stroke="url(#capg)" stroke-width="3.7"/><circle cx="108.3" cy="99.9" r="3.5" fill="#fff"/></svg><div class="dval">0.84&nbsp;(bar)</div></div>
<div class="dial" style="left:791px;top:466px"><div class="dhead">Out 1 Pressure</div><svg width="218" height="205" viewBox="0 0 218 205" style="position:absolute;left:0;top:20px"><path d="M71.60,168.93 A79,79 0 1 1 147.00,168.93" fill="none" stroke="#8c9ba5" stroke-width="7.6"/><path d="M71.60,168.93 A79,79 0 0 1 67.20,166.35" fill="none" stroke="#6e808b" stroke-width="7.6"/><line x1="71.30" y1="165.32" x2="77.15" y2="155.19" stroke="#6a7b86" stroke-width="1.2"/><line x1="67.45" y1="157.10" x2="69.68" y2="154.03" stroke="#6f808b" stroke-width="1.3"/><line x1="61.66" y1="152.41" x2="64.20" y2="149.59" stroke="#6f808b" stroke-width="1.3"/><line x1="56.39" y1="147.14" x2="59.21" y2="144.60" stroke="#6f808b" stroke-width="1.3"/><line x1="51.70" y1="141.35" x2="54.77" y2="139.12" stroke="#6f808b" stroke-width="1.3"/><line x1="43.48" y1="137.50" x2="53.61" y2="131.65" stroke="#6a7b86" stroke-width="1.2"/><line x1="44.26" y1="128.46" x2="47.73" y2="126.91" stroke="#6f808b" stroke-width="1.3"/><line x1="41.58" y1="121.50" x2="45.20" y2="120.33" stroke="#6f808b" stroke-width="1.3"/><line x1="39.66" y1="114.30" x2="43.37" y2="113.51" stroke="#6f808b" stroke-width="1.3"/><line x1="38.49" y1="106.94" x2="42.27" y2="106.55" stroke="#6f808b" stroke-width="1.3"/><line x1="33.30" y1="99.50" x2="45.00" y2="99.50" stroke="#6a7b86" stroke-width="1.2"/><line x1="38.49" y1="92.06" x2="42.27" y2="92.45" stroke="#6f808b" stroke-width="1.3"/><line x1="39.66" y1="84.70" x2="43.37" y2="85.49" stroke="#6f808b" stroke-width="1.3"/><line x1="41.58" y1="77.50" x2="45.20" y2="78.67" stroke="#6f808b" stroke-width="1.3"/><line x1="44.26" y1="70.54" x2="47.73" y2="72.09" stroke="#6f808b" stroke-width="1.3"/><line x1="43.48" y1="61.50" x2="53.61" y2="67.35" stroke="#6a7b86" stroke-width="1.2"/><line x1="51.70" y1="57.65" x2="54.77" y2="59.88" stroke="#6f808b" stroke-width="1.3"/><line x1="56.39" y1="51.86" x2="59.21" y2="54.40" stroke="#6f808b" stroke-width="1.3"/><line x1="61.66" y1="46.59" x2="64.20" y2="49.41" stroke="#6f808b" stroke-width="1.3"/><line x1="67.45" y1="41.90" x2="69.68" y2="44.97" stroke="#6f808b" stroke-width="1.3"/><line x1="71.30" y1="33.68" x2="77.15" y2="43.81" stroke="#6a7b86" stroke-width="1.2"/><line x1="80.34" y1="34.46" x2="81.89" y2="37.93" stroke="#6f808b" stroke-width="1.3"/><line x1="87.30" y1="31.78" x2="88.47" y2="35.40" stroke="#6f808b" stroke-width="1.3"/><line x1="94.50" y1="29.86" x2="95.29" y2="33.57" stroke="#6f808b" stroke-width="1.3"/><line x1="101.86" y1="28.69" x2="102.25" y2="32.47" stroke="#6f808b" stroke-width="1.3"/><line x1="109.30" y1="23.50" x2="109.30" y2="35.20" stroke="#6a7b86" stroke-width="1.2"/><line x1="116.74" y1="28.69" x2="116.35" y2="32.47" stroke="#6f808b" stroke-width="1.3"/><line x1="124.10" y1="29.86" x2="123.31" y2="33.57" stroke="#6f808b" stroke-width="1.3"/><line x1="131.30" y1="31.78" x2="130.13" y2="35.40" stroke="#6f808b" stroke-width="1.3"/><line x1="138.26" y1="34.46" x2="136.71" y2="37.93" stroke="#6f808b" stroke-width="1.3"/><line x1="147.30" y1="33.68" x2="141.45" y2="43.81" stroke="#6a7b86" stroke-width="1.2"/><line x1="151.15" y1="41.90" x2="148.92" y2="44.97" stroke="#6f808b" stroke-width="1.3"/><line x1="156.94" y1="46.59" x2="154.40" y2="49.41" stroke="#6f808b" stroke-width="1.3"/><line x1="162.21" y1="51.86" x2="159.39" y2="54.40" stroke="#6f808b" stroke-width="1.3"/><line x1="166.90" y1="57.65" x2="163.83" y2="59.88" stroke="#6f808b" stroke-width="1.3"/><line x1="175.12" y1="61.50" x2="164.99" y2="67.35" stroke="#6a7b86" stroke-width="1.2"/><line x1="174.34" y1="70.54" x2="170.87" y2="72.09" stroke="#6f808b" stroke-width="1.3"/><line x1="177.02" y1="77.50" x2="173.40" y2="78.67" stroke="#6f808b" stroke-width="1.3"/><line x1="178.94" y1="84.70" x2="175.23" y2="85.49" stroke="#6f808b" stroke-width="1.3"/><line x1="180.11" y1="92.06" x2="176.33" y2="92.45" stroke="#6f808b" stroke-width="1.3"/><line x1="185.30" y1="99.50" x2="173.60" y2="99.50" stroke="#6a7b86" stroke-width="1.2"/><line x1="180.11" y1="106.94" x2="176.33" y2="106.55" stroke="#6f808b" stroke-width="1.3"/><line x1="178.94" y1="114.30" x2="175.23" y2="113.51" stroke="#6f808b" stroke-width="1.3"/><line x1="177.02" y1="121.50" x2="173.40" y2="120.33" stroke="#6f808b" stroke-width="1.3"/><line x1="174.34" y1="128.46" x2="170.87" y2="126.91" stroke="#6f808b" stroke-width="1.3"/><line x1="175.12" y1="137.50" x2="164.99" y2="131.65" stroke="#6a7b86" stroke-width="1.2"/><line x1="166.90" y1="141.35" x2="163.83" y2="139.12" stroke="#6f808b" stroke-width="1.3"/><line x1="162.21" y1="147.14" x2="159.39" y2="144.60" stroke="#6f808b" stroke-width="1.3"/><line x1="156.94" y1="152.41" x2="154.40" y2="149.59" stroke="#6f808b" stroke-width="1.3"/><line x1="151.15" y1="157.10" x2="148.92" y2="154.03" stroke="#6f808b" stroke-width="1.3"/><line x1="147.30" y1="165.32" x2="141.45" y2="155.19" stroke="#6a7b86" stroke-width="1.2"/><text x="82.05" y="136.00" font-size="9.6" text-anchor="middle" fill="#111" transform="scale(1,1.1)">0</text><text x="54.80" y="93.09" font-size="9.6" text-anchor="middle" fill="#111" transform="scale(1,1.1)">2</text><text x="82.05" y="50.18" font-size="9.6" text-anchor="middle" fill="#111" transform="scale(1,1.1)">4</text><text x="136.55" y="50.18" font-size="9.6" text-anchor="middle" fill="#111" transform="scale(1,1.1)">6</text><text x="163.80" y="93.09" font-size="9.6" text-anchor="middle" fill="#111" transform="scale(1,1.1)">8</text><text x="136.55" y="136.00" font-size="9.6" text-anchor="middle" fill="#111" transform="scale(1,1.1)">10</text><polygon points="108.53,102.99 37.52,105.45 37.47,104.75 108.07,96.81" fill="#536875"/><circle cx="108.3" cy="99.9" r="5.35" fill="none" stroke="url(#capg)" stroke-width="3.7"/><circle cx="108.3" cy="99.9" r="3.5" fill="#fff"/></svg><div class="dval">1.86&nbsp;(bar)</div></div>
<div class="dial" style="left:1031px;top:466px"><div class="dhead">Out 2 Pressure</div><svg width="218" height="205" viewBox="0 0 218 205" style="position:absolute;left:0;top:20px"><path d="M71.60,168.93 A79,79 0 1 1 147.00,168.93" fill="none" stroke="#8c9ba5" stroke-width="7.6"/><path d="M71.60,168.93 A79,79 0 0 1 67.20,166.35" fill="none" stroke="#6e808b" stroke-width="7.6"/><line x1="71.30" y1="165.32" x2="77.15" y2="155.19" stroke="#6a7b86" stroke-width="1.2"/><line x1="67.45" y1="157.10" x2="69.68" y2="154.03" stroke="#6f808b" stroke-width="1.3"/><line x1="61.66" y1="152.41" x2="64.20" y2="149.59" stroke="#6f808b" stroke-width="1.3"/><line x1="56.39" y1="147.14" x2="59.21" y2="144.60" stroke="#6f808b" stroke-width="1.3"/><line x1="51.70" y1="141.35" x2="54.77" y2="139.12" stroke="#6f808b" stroke-width="1.3"/><line x1="43.48" y1="137.50" x2="53.61" y2="131.65" stroke="#6a7b86" stroke-width="1.2"/><line x1="44.26" y1="128.46" x2="47.73" y2="126.91" stroke="#6f808b" stroke-width="1.3"/><line x1="41.58" y1="121.50" x2="45.20" y2="120.33" stroke="#6f808b" stroke-width="1.3"/><line x1="39.66" y1="114.30" x2="43.37" y2="113.51" stroke="#6f808b" stroke-width="1.3"/><line x1="38.49" y1="106.94" x2="42.27" y2="106.55" stroke="#6f808b" stroke-width="1.3"/><line x1="33.30" y1="99.50" x2="45.00" y2="99.50" stroke="#6a7b86" stroke-width="1.2"/><line x1="38.49" y1="92.06" x2="42.27" y2="92.45" stroke="#6f808b" stroke-width="1.3"/><line x1="39.66" y1="84.70" x2="43.37" y2="85.49" stroke="#6f808b" stroke-width="1.3"/><line x1="41.58" y1="77.50" x2="45.20" y2="78.67" stroke="#6f808b" stroke-width="1.3"/><line x1="44.26" y1="70.54" x2="47.73" y2="72.09" stroke="#6f808b" stroke-width="1.3"/><line x1="43.48" y1="61.50" x2="53.61" y2="67.35" stroke="#6a7b86" stroke-width="1.2"/><line x1="51.70" y1="57.65" x2="54.77" y2="59.88" stroke="#6f808b" stroke-width="1.3"/><line x1="56.39" y1="51.86" x2="59.21" y2="54.40" stroke="#6f808b" stroke-width="1.3"/><line x1="61.66" y1="46.59" x2="64.20" y2="49.41" stroke="#6f808b" stroke-width="1.3"/><line x1="67.45" y1="41.90" x2="69.68" y2="44.97" stroke="#6f808b" stroke-width="1.3"/><line x1="71.30" y1="33.68" x2="77.15" y2="43.81" stroke="#6a7b86" stroke-width="1.2"/><line x1="80.34" y1="34.46" x2="81.89" y2="37.93" stroke="#6f808b" stroke-width="1.3"/><line x1="87.30" y1="31.78" x2="88.47" y2="35.40" stroke="#6f808b" stroke-width="1.3"/><line x1="94.50" y1="29.86" x2="95.29" y2="33.57" stroke="#6f808b" stroke-width="1.3"/><line x1="101.86" y1="28.69" x2="102.25" y2="32.47" stroke="#6f808b" stroke-width="1.3"/><line x1="109.30" y1="23.50" x2="109.30" y2="35.20" stroke="#6a7b86" stroke-width="1.2"/><line x1="116.74" y1="28.69" x2="116.35" y2="32.47" stroke="#6f808b" stroke-width="1.3"/><line x1="124.10" y1="29.86" x2="123.31" y2="33.57" stroke="#6f808b" stroke-width="1.3"/><line x1="131.30" y1="31.78" x2="130.13" y2="35.40" stroke="#6f808b" stroke-width="1.3"/><line x1="138.26" y1="34.46" x2="136.71" y2="37.93" stroke="#6f808b" stroke-width="1.3"/><line x1="147.30" y1="33.68" x2="141.45" y2="43.81" stroke="#6a7b86" stroke-width="1.2"/><line x1="151.15" y1="41.90" x2="148.92" y2="44.97" stroke="#6f808b" stroke-width="1.3"/><line x1="156.94" y1="46.59" x2="154.40" y2="49.41" stroke="#6f808b" stroke-width="1.3"/><line x1="162.21" y1="51.86" x2="159.39" y2="54.40" stroke="#6f808b" stroke-width="1.3"/><line x1="166.90" y1="57.65" x2="163.83" y2="59.88" stroke="#6f808b" stroke-width="1.3"/><line x1="175.12" y1="61.50" x2="164.99" y2="67.35" stroke="#6a7b86" stroke-width="1.2"/><line x1="174.34" y1="70.54" x2="170.87" y2="72.09" stroke="#6f808b" stroke-width="1.3"/><line x1="177.02" y1="77.50" x2="173.40" y2="78.67" stroke="#6f808b" stroke-width="1.3"/><line x1="178.94" y1="84.70" x2="175.23" y2="85.49" stroke="#6f808b" stroke-width="1.3"/><line x1="180.11" y1="92.06" x2="176.33" y2="92.45" stroke="#6f808b" stroke-width="1.3"/><line x1="185.30" y1="99.50" x2="173.60" y2="99.50" stroke="#6a7b86" stroke-width="1.2"/><line x1="180.11" y1="106.94" x2="176.33" y2="106.55" stroke="#6f808b" stroke-width="1.3"/><line x1="178.94" y1="114.30" x2="175.23" y2="113.51" stroke="#6f808b" stroke-width="1.3"/><line x1="177.02" y1="121.50" x2="173.40" y2="120.33" stroke="#6f808b" stroke-width="1.3"/><line x1="174.34" y1="128.46" x2="170.87" y2="126.91" stroke="#6f808b" stroke-width="1.3"/><line x1="175.12" y1="137.50" x2="164.99" y2="131.65" stroke="#6a7b86" stroke-width="1.2"/><line x1="166.90" y1="141.35" x2="163.83" y2="139.12" stroke="#6f808b" stroke-width="1.3"/><line x1="162.21" y1="147.14" x2="159.39" y2="144.60" stroke="#6f808b" stroke-width="1.3"/><line x1="156.94" y1="152.41" x2="154.40" y2="149.59" stroke="#6f808b" stroke-width="1.3"/><line x1="151.15" y1="157.10" x2="148.92" y2="154.03" stroke="#6f808b" stroke-width="1.3"/><line x1="147.30" y1="165.32" x2="141.45" y2="155.19" stroke="#6a7b86" stroke-width="1.2"/><text x="82.05" y="136.00" font-size="9.6" text-anchor="middle" fill="#111" transform="scale(1,1.1)">0</text><text x="54.80" y="93.09" font-size="9.6" text-anchor="middle" fill="#111" transform="scale(1,1.1)">2</text><text x="82.05" y="50.18" font-size="9.6" text-anchor="middle" fill="#111" transform="scale(1,1.1)">4</text><text x="136.55" y="50.18" font-size="9.6" text-anchor="middle" fill="#111" transform="scale(1,1.1)">6</text><text x="163.80" y="93.09" font-size="9.6" text-anchor="middle" fill="#111" transform="scale(1,1.1)">8</text><text x="136.55" y="136.00" font-size="9.6" text-anchor="middle" fill="#111" transform="scale(1,1.1)">10</text><polygon points="105.65,101.51 71.22,39.35 71.82,38.99 110.95,98.29" fill="#536875"/><circle cx="108.3" cy="99.9" r="5.35" fill="none" stroke="url(#capg)" stroke-width="3.7"/><circle cx="108.3" cy="99.9" r="3.5" fill="#fff"/></svg><div class="dval">3.96&nbsp;(bar)</div></div>
<div class="panel" style="left:2px;top:742px;width:1623px;height:53px;border-left:1px solid #c8c8c8"></div>
<div class="btn" style="left:1145px;border:1px solid #c6c6c6;background:#e6e6e6;color:#b8b8b8;padding-left:69px">Apply</div>
<svg class="abs" style="left:1159px;top:760px" width="18" height="16"><path d="M2,8.5 L6.5,13 L15.5,2.5" fill="none" stroke="#bdbdbd" stroke-width="2.2"/></svg>
<div class="btn" style="left:1305px;border:1px solid #c6c6c6;background:#e6e6e6;color:#b8b8b8;padding-left:65px">Cancel</div>
<svg class="abs" style="left:1319px;top:758px" width="20" height="20"><circle cx="9.8" cy="10" r="8.2" fill="none" stroke="#bdbdbd" stroke-width="1.4"/><path d="M6.5,6.7 L13.1,13.3 M13.1,6.7 L6.5,13.3" stroke="#bdbdbd" stroke-width="1.5"/></svg>
<div class="btn" style="left:1465px;background:#536775;color:#fff;padding-left:70px;line-height:34px">Close</div>
<svg class="abs" style="left:1480px;top:759px" width="18" height="18"><path d="M2.5,2.5 L15.5,15.5 M15.5,2.5 L2.5,15.5" stroke="#fff" stroke-width="3"/></svg></body></html>
